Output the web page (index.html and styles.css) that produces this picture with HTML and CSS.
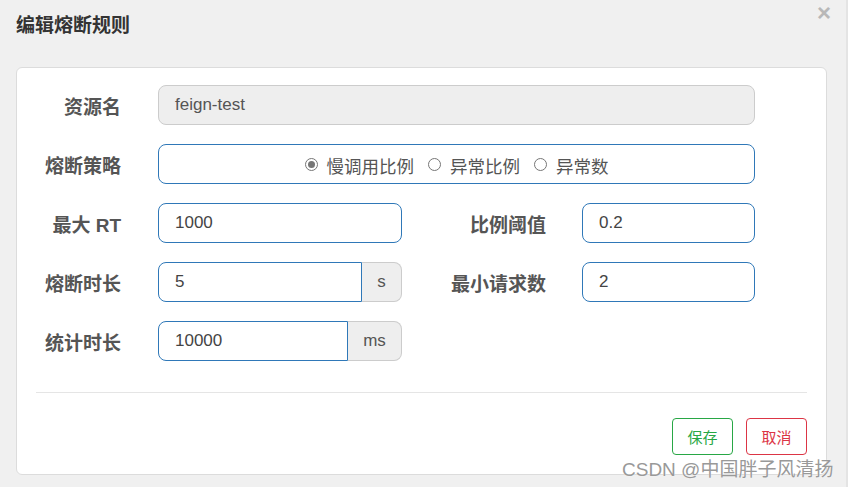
FILE: index.html
```html
<!DOCTYPE html>
<html lang="zh">
<head>
<meta charset="utf-8">
<title>编辑熔断规则</title>
<link rel="stylesheet" href="styles.css">
</head>
<body>
<div class="dialog">
  <div class="header">
    <h1 class="title">编辑熔断规则</h1>
    <span class="close">×</span>
  </div>
  <div class="card">
    <div class="form">
      <div class="row">
        <label class="label">资源名</label>
        <div class="control wide disabled">feign-test</div>
      </div>
      <div class="row">
        <label class="label">熔断策略</label>
        <div class="control wide radios">
          <span class="radio checked"></span><span class="radio-text">慢调用比例</span>
          <span class="radio"></span><span class="radio-text">异常比例</span>
          <span class="radio"></span><span class="radio-text">异常数</span>
        </div>
      </div>
      <div class="row">
        <label class="label">最大 RT</label>
        <div class="control half">1000</div>
        <label class="label label2">比例阈值</label>
        <div class="control small">0.2</div>
      </div>
      <div class="row">
        <label class="label">熔断时长</label>
        <div class="group half">
          <div class="control grow">5</div>
          <div class="addon addon-s">s</div>
        </div>
        <label class="label label2">最小请求数</label>
        <div class="control small">2</div>
      </div>
      <div class="row">
        <label class="label">统计时长</label>
        <div class="group half">
          <div class="control grow">10000</div>
          <div class="addon addon-ms">ms</div>
        </div>
      </div>
    </div>
    <div class="divider"></div>
    <div class="footer">
      <button class="btn btn-save">保存</button>
      <button class="btn btn-cancel">取消</button>
    </div>
  </div>
  <div class="watermark">CSDN @中国胖子风清扬</div>
</div>
</body>
</html>
```
FILE: styles.css
```css
* { box-sizing: border-box; }
html, body {
  margin: 0;
  padding: 0;
}
body {
  width: 848px;
  height: 487px;
  overflow: hidden;
  background: #f0f0f0;
  font-family: "Liberation Sans", "Noto Sans CJK SC", sans-serif;
  color: #555;
}
.dialog {
  position: relative;
  width: 848px;
  height: 487px;
  border-right: 2px solid #e4e4e4;
}
.header {
  display: flex;
  justify-content: space-between;
  align-items: flex-start;
  height: 67px;
  padding: 0 16px 0 16px;
}
.title {
  margin: 13px 0 0 0;
  font-size: 19px;
  font-weight: bold;
  color: #333;
  line-height: 26px;
}
.close {
  margin-top: 1px;
  margin-right: -1px;
  font-size: 24px;
  font-weight: bold;
  color: #b8b8b8;
  line-height: 24px;
}
.card {
  margin-left: 16px;
  width: 811px;
  height: 408px;
  background: #fff;
  border: 1px solid #dcdcdc;
  border-radius: 6px;
  padding: 17px 19px 0 0;
}
.form {
  display: flex;
  flex-direction: column;
  gap: 19px;
}
.row {
  display: flex;
  align-items: center;
  height: 40px;
}
.label {
  width: 104px;
  text-align: right;
  font-size: 19px;
  font-weight: bold;
  color: #555;
  margin-right: 37px;
  white-space: nowrap;
}
.label2 {
  width: 144px;
  margin-right: 36px;
}
.control {
  height: 40px;
  border: 1px solid #2f78b8;
  border-radius: 8px;
  padding: 0 16px;
  display: flex;
  align-items: center;
  font-size: 17px;
  color: #444;
  background: #fff;
}
.wide { width: 597px; }
.half { width: 244px; }
.small { width: 173px; }
.disabled {
  background: #eeeeee;
  border-color: #cccccc;
  color: #555;
}
.radios {
  justify-content: center;
  color: #555;
  padding-top: 3px;
}
.radio {
  width: 13px;
  height: 13px;
  border: 1px solid #767676;
  border-radius: 50%;
  margin-right: 9px;
  display: inline-flex;
  align-items: center;
  justify-content: center;
  margin-top: -3px;
}
.radio.checked::after {
  content: "";
  width: 7px;
  height: 7px;
  border-radius: 50%;
  background: #767676;
}
.radio-text {
  margin-right: 14px;
  font-family: "Noto Sans CJK SC", sans-serif;
  font-size: 17.5px;
}
.radio-text:last-child { margin-right: 0; }
.group {
  display: flex;
  height: 40px;
}
.grow {
  flex: 1;
  border-radius: 8px 0 0 8px;
}
.addon {
  height: 40px;
  background: #eeeeee;
  border: 1px solid #cccccc;
  border-left: none;
  border-radius: 0 8px 8px 0;
  display: flex;
  align-items: center;
  justify-content: center;
  font-size: 17px;
  color: #555;
}
.addon-s { width: 40px; }
.addon-ms { width: 54px; }
.divider {
  margin: 31px 0 0 19px;
  height: 1px;
  background: #e5e5e5;
}
.footer {
  display: flex;
  justify-content: flex-end;
  gap: 13px;
  margin-top: 25px;
}
.btn {
  width: 61px;
  height: 37px;
  background: #fff;
  border-radius: 4px;
  font-size: 15px;
  font-family: "Noto Sans CJK SC", sans-serif;
  padding: 0;
  cursor: pointer;
}
.btn-save {
  border: 1px solid #28a745;
  color: #28a745;
}
.btn-cancel {
  border: 1px solid #dc3545;
  color: #dc3545;
}
.watermark {
  position: absolute;
  left: 622px;
  top: 454px;
  font-size: 19px;
  color: #999;
  text-shadow: 0 0 1px #fff;
  white-space: nowrap;
}
```
